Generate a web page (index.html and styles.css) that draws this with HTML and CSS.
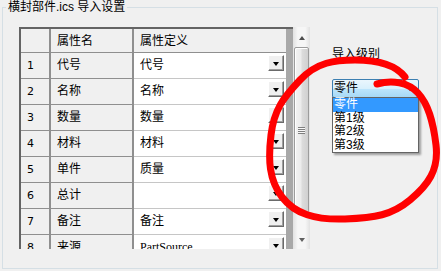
FILE: index.html
```html
<!DOCTYPE html>
<html lang="zh-CN">
<head>
<meta charset="utf-8">
<title>导入设置</title>
<link rel="stylesheet" href="styles.css">
</head>
<body>
<fieldset class="group">
  <legend class="group-title">横封部件.ics 导入设置</legend>
  <div class="content">
    <div class="table-wrap">
      <div class="gridbox">
        <div class="grid">
          <div class="row head">
            <div class="c num"></div>
            <div class="c name">属性名</div>
            <div class="c def">属性定义</div>
          </div>
          <div class="row">
            <div class="c num">1</div>
            <div class="c name">代号</div>
            <div class="c def"><span>代号</span><span class="dd"></span></div>
          </div>
          <div class="row">
            <div class="c num">2</div>
            <div class="c name">名称</div>
            <div class="c def"><span>名称</span><span class="dd"></span></div>
          </div>
          <div class="row">
            <div class="c num">3</div>
            <div class="c name">数量</div>
            <div class="c def"><span>数量</span><span class="dd"></span></div>
          </div>
          <div class="row">
            <div class="c num">4</div>
            <div class="c name">材料</div>
            <div class="c def"><span>材料</span><span class="dd"></span></div>
          </div>
          <div class="row">
            <div class="c num">5</div>
            <div class="c name">单件</div>
            <div class="c def"><span>质量</span><span class="dd"></span></div>
          </div>
          <div class="row">
            <div class="c num">6</div>
            <div class="c name">总计</div>
            <div class="c def"><span></span><span class="dd"></span></div>
          </div>
          <div class="row">
            <div class="c num">7</div>
            <div class="c name">备注</div>
            <div class="c def"><span>备注</span><span class="dd"></span></div>
          </div>
          <div class="row">
            <div class="c num">8</div>
            <div class="c name">来源</div>
            <div class="c def"><span class="lat">PartSource</span><span class="dd"></span></div>
          </div>
        </div>
        <div class="strip"></div>
      </div>
      <div class="vscroll">
        <div class="sb-btn"><span class="arr-up"></span></div>
        <div class="thumb"><span class="grip"></span></div>
        <div class="track"></div>
        <div class="sb-btn"><span class="arr-down"></span></div>
      </div>
    </div>
    <div class="side">
      <div class="side-label">导入级别</div>
      <div class="combo"><span class="combo-text">零件</span><span class="combo-arrow"></span></div>
      <ul class="droplist">
        <li class="sel">零件</li>
        <li>第1级</li>
        <li>第2级</li>
        <li>第3级</li>
      </ul>
    </div>
  </div>
</fieldset>
<svg class="annot" width="441" height="271" viewBox="0 0 441 271">
  <path d="M377,84 C392,80 408,82 418,93 S433,120 436,145 S428,185 410,200 S375,218 345,219 S295,214 282,197 S268,160 271,135 S283,98 300,80 S335,60 355,60 S395,64 405,77" fill="none" stroke="#ff0000" stroke-width="7" stroke-linecap="round" stroke-linejoin="round"/>
</svg>
</body>
</html>
```
FILE: styles.css
```css
body {
  margin: 0;
  width: 441px;
  height: 271px;
  overflow: hidden;
  position: relative;
  background: #f0f0f0;
  font-family: "Liberation Sans", "Noto Sans CJK SC", sans-serif;
  font-size: 12px;
  color: #000;
}

.group {
  margin: 0 3px 0 2px;
  padding: 0;
  border: 1px solid #d5dfe5;
  min-width: 0;
}

.group-title {
  margin-left: 3px;
  padding: 0 2px;
  line-height: 14px;
  font-size: 12px;
}

.content {
  height: 254px;
  box-sizing: border-box;
  padding: 13px 0 0 16px;
  display: flex;
  align-items: flex-start;
}

.table-wrap {
  display: flex;
  height: 222px;
}

.gridbox {
  display: flex;
  border-top: 2px solid #646464;
  border-left: 2px solid #646464;
  overflow: hidden;
}

.grid {
  width: 265px;
}

.row {
  display: flex;
  height: 26px;
}

.row.head {
  height: 24px;
}

.c {
  box-sizing: border-box;
  height: 100%;
  padding-left: 6px;
  line-height: 25px;
  white-space: nowrap;
}

.c.num {
  width: 30px;
  background: #f0f0f0;
  border-right: 2px solid #8f8f8f;
  border-bottom: 1px solid #8f8f8f;
  font-family: "DejaVu Sans", sans-serif;
  font-size: 11px;
}

.c.name {
  width: 83px;
  background: #f0f0f0;
  border-right: 2px solid #8f8f8f;
  border-bottom: 1px solid #8f8f8f;
}

.c.def {
  width: 152px;
  background: #fff;
  border-bottom: 1px solid #c6c6c6;
  display: flex;
  justify-content: space-between;
  align-items: flex-start;
}

.head .c.def {
  background: #f0f0f0;
  border-bottom: 1px solid #8f8f8f;
}

.lat {
  font-family: "Liberation Serif", serif;
  font-size: 12px;
}

.dd {
  width: 16px;
  height: 16px;
  box-sizing: border-box;
  margin: 2px 2px 0 0;
  background: #f0f0f0;
  border-top: 1px solid #fff;
  border-left: 1px solid #fff;
  border-right: 1px solid #6a6a6a;
  border-bottom: 1px solid #6a6a6a;
  box-shadow: inset -1px -1px 0 #a0a0a0;
  display: flex;
  align-items: center;
  justify-content: center;
}

.dd::after {
  content: "";
  width: 0;
  height: 0;
  border-left: 3.5px solid transparent;
  border-right: 3.5px solid transparent;
  border-top: 4px solid #000;
  margin-top: 1px;
}

.strip {
  width: 7px;
  background: #a8a8a8;
}

.vscroll {
  width: 17px;
  height: 222px;
  box-sizing: border-box;
  border-left: 1px solid #e4e4e4;
  border-right: 1px solid #e4e4e4;
  background: linear-gradient(90deg, #e6e6e6, #f6f6f6 25%, #f6f6f6 75%, #e6e6e6);
  display: flex;
  flex-direction: column;
  align-items: center;
}

.sb-btn {
  height: 19px;
  width: 100%;
  flex: none;
  display: flex;
  align-items: center;
  justify-content: center;
}

.arr-up {
  width: 0;
  height: 0;
  border-left: 3.5px solid transparent;
  border-right: 3.5px solid transparent;
  border-bottom: 4px solid #4d4d4d;
  margin-top: 2px;
}

.arr-down {
  width: 0;
  height: 0;
  border-left: 3.5px solid transparent;
  border-right: 3.5px solid transparent;
  border-top: 4px solid #606060;
}

.thumb {
  margin-top: 1px;
  width: 15px;
  height: 166px;
  box-sizing: border-box;
  flex: none;
  border: 1px solid #9c9c9c;
  border-radius: 2px;
  background: linear-gradient(90deg, #f4f4f4, #ececec 45%, #dcdcdc 55%, #d0d0d0);
  box-shadow: inset 1px 1px 0 #fff;
  display: flex;
  align-items: center;
  justify-content: center;
}

.grip {
  width: 7px;
  height: 7px;
  background: repeating-linear-gradient(180deg, #7f7f7f 0 1px, #f8f8f8 1px 2px);
}

.track {
  flex: 1;
}

.side {
  margin-left: 22px;
  padding-top: 20px;
  width: 87px;
}

.side-label {
  line-height: 14px;
  margin-bottom: 18px;
  white-space: nowrap;
}

.combo {
  height: 19px;
  box-sizing: border-box;
  border: 1px solid #3c7fb1;
  border-radius: 2px;
  background: linear-gradient(180deg, #eaf6fd, #d9f0fc 50%, #bee6fd 50%, #a7d9f5);
  display: flex;
  align-items: center;
  justify-content: space-between;
  padding: 0 5px 0 1px;
}

.combo-text {
  line-height: 17px;
}

.combo-arrow {
  width: 0;
  height: 0;
  border-left: 3.5px solid transparent;
  border-right: 3.5px solid transparent;
  border-top: 4px solid #000;
}

.droplist {
  list-style: none;
  margin: -1px 0 0;
  padding: 0;
  width: 87px;
  box-sizing: border-box;
  border: 1px solid #646464;
  background: #fff;
  box-shadow: 2px 2px 2px rgba(0, 0, 0, 0.35);
}

.droplist li {
  height: 13.5px;
  line-height: 13.5px;
  padding-left: 1px;
  white-space: nowrap;
}

.droplist li.sel {
  background: #3399ff;
  color: #fff;
}

.annot {
  position: absolute;
  left: 0;
  top: 0;
  pointer-events: none;
}
```
